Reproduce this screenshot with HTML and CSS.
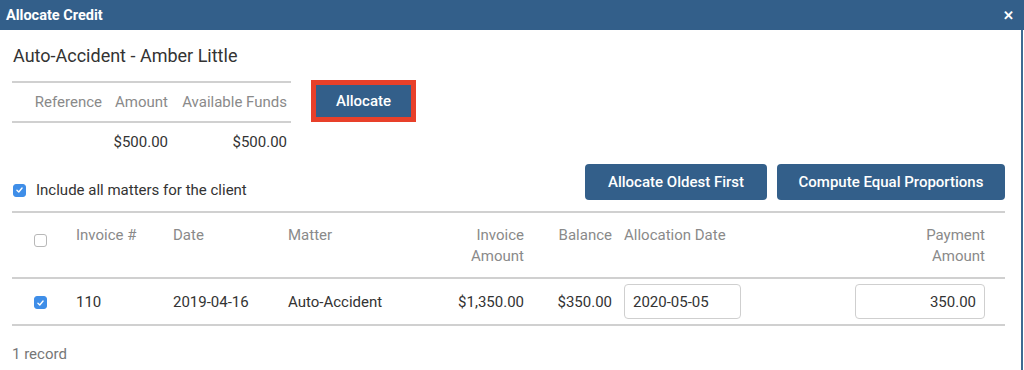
FILE: index.html
```html
<!DOCTYPE html>
<html>
<head>
<meta charset="utf-8">
<link rel="stylesheet" href="styles.css">
</head>
<body>
<div class="modal">
  <div class="titlebar">
    <span class="title">Allocate Credit</span>
    <span class="close">&#x2715;</span>
  </div>
  <div class="body">
    <h2 class="heading">Auto-Accident - Amber Little</h2>
    <div class="summary-row">
      <table class="summary">
        <thead>
          <tr><th class="c-ref">Reference</th><th class="c-amt">Amount</th><th class="c-funds">Available Funds</th></tr>
        </thead>
        <tbody>
          <tr><td></td><td>$500.00</td><td>$500.00</td></tr>
        </tbody>
      </table>
      <button class="btn btn-allocate">Allocate</button>
    </div>
    <div class="toolbar">
      <label class="include">
        <span class="cb cb-checked"><svg viewBox="0 0 12 12" width="12" height="12"><path d="M3.2 6.3 L5.2 8.2 L8.8 3.8" fill="none" stroke="#fff" stroke-width="1.5" stroke-linecap="round" stroke-linejoin="round"/></svg></span>
        Include all matters for the client
      </label>
      <div class="actions">
        <button class="btn btn-action btn-oldest">Allocate Oldest First</button>
        <button class="btn btn-action btn-equal">Compute Equal Proportions</button>
      </div>
    </div>
    <table class="grid">
      <colgroup>
        <col class="w-cb"><col class="w-inv"><col class="w-date"><col class="w-matter"><col class="w-iamt"><col class="w-bal"><col class="w-adate"><col class="w-pamt">
      </colgroup>
      <thead>
        <tr>
          <th class="col-cb"><span class="cb"></span></th>
          <th class="left">Invoice #</th>
          <th class="left">Date</th>
          <th class="left">Matter</th>
          <th class="right"><span class="wrap">Invoice Amount</span></th>
          <th class="right">Balance</th>
          <th class="left adate">Allocation Date</th>
          <th class="right pamt"><span class="wrap">Payment Amount</span></th>
        </tr>
      </thead>
      <tbody>
        <tr>
          <td class="col-cb"><span class="cb cb-checked"><svg viewBox="0 0 12 12" width="12" height="12"><path d="M3.2 6.3 L5.2 8.2 L8.8 3.8" fill="none" stroke="#fff" stroke-width="1.5" stroke-linecap="round" stroke-linejoin="round"/></svg></span></td>
          <td class="left">110</td>
          <td class="left">2019-04-16</td>
          <td class="left">Auto-Accident</td>
          <td class="right">$1,350.00</td>
          <td class="right">$350.00</td>
          <td class="left adate"><input class="field field-date" type="text" value="2020-05-05"></td>
          <td class="right pamt"><input class="field field-amt" type="text" value="350.00"></td>
        </tr>
      </tbody>
    </table>
    <div class="footer">1 record</div>
  </div>
</div>
</body>
</html>
```
FILE: styles.css
```css
* { box-sizing: border-box; }
html, body { margin: 0; padding: 0; background: #fff; }
body {
  font-family: Roboto, "Liberation Sans", sans-serif;
  font-size: 15px;
  color: #333;
  width: 1024px;
  height: 370px;
  overflow: hidden;
}
.modal { width: 1024px; }
.titlebar {
  height: 30px;
  background: #335f8a;
  color: #fff;
  display: flex;
  align-items: center;
  justify-content: space-between;
  padding: 0 10px 0 6px;
}
.title { font-weight: 700; font-size: 14.5px; }
.close { font-weight: 700; font-size: 13px; }
.body {
  width: 1023px;
  height: 340px;
  border-right: 2px solid #3d6992;
  padding: 14px 0 0 12px;
}
.heading {
  margin: 0 0 0 1px;
  font-size: 18px;
  font-weight: 400;
  line-height: 24px;
  color: #333;
}
.summary-row {
  display: flex;
  align-items: flex-start;
  margin-top: 13px;
}
.summary {
  border-collapse: collapse;
  width: 279px;
  table-layout: fixed;
}
.summary th {
  font-weight: 400;
  color: #8a8a8a;
  text-align: right;
  border-top: 2px solid #d0d0d0;
  border-bottom: 2px solid #d0d0d0;
  height: 40px;
  padding: 0 4px 0 0;
}
.summary .c-ref { width: 96px; padding-right: 6px; }
.summary .c-amt { width: 66px; padding-right: 6px; }
.summary .c-funds { width: 117px; }
.summary td {
  text-align: right;
  height: 38px;
  padding: 0 4px 0 0;
}
.summary td:nth-child(2) { padding-right: 6px; }
.btn {
  font-family: Roboto, "Liberation Sans", sans-serif;
  font-size: 15px;
  font-weight: 500;
  color: #fff;
  background: #335f8a;
  border: none;
  cursor: pointer;
  white-space: nowrap;
}
.btn-allocate {
  margin: 4px 0 0 25px;
  width: 95px;
  height: 32px;
  outline: 5px solid #e8402a;
  border-radius: 0;
}
.toolbar {
  display: flex;
  align-items: flex-end;
  justify-content: space-between;
  width: 993px;
  margin-top: 4px;
  padding-bottom: 11px;
}
.include {
  display: flex;
  align-items: center;
  gap: 10px;
  padding-left: 1px;
  padding-bottom: 1px;
}
.cb {
  display: inline-flex;
  align-items: center;
  justify-content: center;
  width: 13px;
  height: 13px;
  border: 1px solid #b8b8b8;
  border-radius: 3px;
  background: #fff;
  vertical-align: middle;
}
.cb-checked {
  background: #3f8ee8;
  border-color: #3f8ee8;
}
.actions { display: flex; gap: 10px; }
.btn-action {
  height: 36px;
  border-radius: 4px;
  padding: 0;
}
.btn-oldest { width: 182px; }
.btn-equal { width: 228px; }
.grid {
  width: 993px;
  border-collapse: collapse;
  table-layout: fixed;
}
.w-cb { width: 56px; }
.w-inv { width: 97px; }
.w-date { width: 115px; }
.w-matter { width: 160px; }
.w-iamt { width: 92px; }
.w-bal { width: 88px; }
.w-adate { width: 230px; }
.w-pamt { width: 155px; }
.grid th {
  font-weight: 400;
  color: #8a8a8a;
  line-height: 21px;
  height: 66px;
  vertical-align: top;
  padding: 12px 8px 0 8px;
  border-top: 2px solid #d0d0d0;
  border-bottom: 2px solid #d0d0d0;
}
.grid td {
  height: 47px;
  padding: 0 8px;
  vertical-align: middle;
  border-bottom: 2px solid #d0d0d0;
}
.left { text-align: left; }
.right { text-align: right; }
.wrap { display: inline-block; max-width: 70px; }
.col-cb { padding-left: 22px !important; padding-right: 0 !important; text-align: left; }
.grid th.col-cb { padding-top: 16px; }
.grid .adate { padding-left: 4px; }
.grid .pamt { padding-left: 5px; padding-right: 20px; }
.field {
  font-family: Roboto, "Liberation Sans", sans-serif;
  font-size: 15px;
  color: #333;
  height: 35px;
  border: 1px solid #cfcfcf;
  border-radius: 4px;
  padding: 0 8px;
  background: #fff;
}
.field-date { width: 117px; text-align: left; }
.field-amt { width: 130px; text-align: right; }
.footer {
  color: #777;
  padding-top: 19px;
}
```
